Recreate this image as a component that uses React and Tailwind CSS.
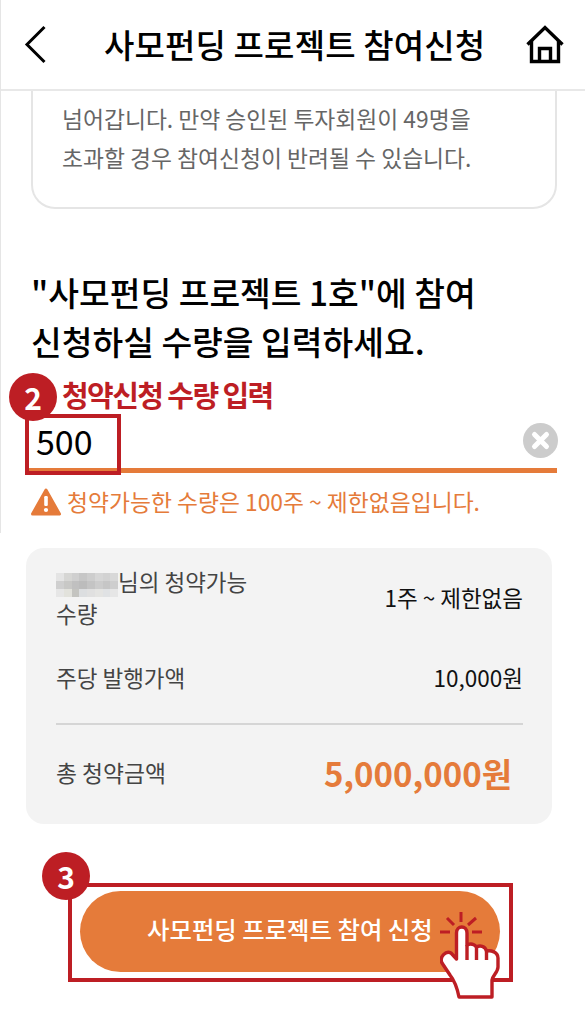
const FONT = "font-['Noto_Sans_CJK_KR','Noto_Sans',sans-serif]";

// 이름 모자이크
const BLUR = [
  '#e4e4e4', '#d6d6d4', '#cfcfcf', '#c6c6c6', '#cdcdcd', '#d6d6d6', '#d2d2d2', '#d8d8d8',
  '#cfcfcf', '#c8c8c6', '#c0c0c0', '#bcbcbc', '#c4c4c4', '#cccccc', '#c6c6c6', '#cecece',
  '#e6e6e6', '#e2e2dc', '#c4c4c0', '#dcdee0', '#e0e0e0', '#e4e4e2', '#e0e2e4', '#e6e6e6',
];

const BackIcon = () => (
  <svg width="24" height="40" viewBox="0 0 24 40" fill="none" stroke="#000" strokeWidth="3">
    <path d="M20.5 2 L3 19.5 L20.5 37" />
  </svg>
);

const HomeIcon = () => (
  <svg width="38" height="39" viewBox="0 0 38 39" fill="none" stroke="#000" strokeWidth="3.4">
    <path d="M1.5 19.5 L19 2.5 L36.5 19.5" />
    <path d="M5.5 15.5 V36.5 H32.5 V15.5" />
    <path d="M13.5 36.5 V23.5 H24.5 V36.5" />
  </svg>
);

const WarnIcon = () => (
  <svg width="30" height="28" viewBox="0 0 30 28">
    <path d="M15 2 L28.5 26 H1.5 Z" fill="#e57b3a" stroke="#e57b3a" strokeLinejoin="round" strokeWidth="3" />
    <rect x="13.2" y="8" width="3.6" height="10" rx="1.2" fill="#fff" />
    <circle cx="15" cy="22" r="2.1" fill="#fff" />
  </svg>
);

const ClearIcon = () => (
  <svg width="35" height="35" viewBox="0 0 35 35">
    <circle cx="17.5" cy="17.5" r="17.5" fill="#cccccc" />
    <path d="M11.5 11.5 L23.5 23.5 M23.5 11.5 L11.5 23.5" stroke="#fff" strokeWidth="5" strokeLinecap="round" />
  </svg>
);

const HandIcon = () => (
  <svg width="60" height="87" viewBox="0 0 60 87" fill="none" className="block">
    <path d="M0 20 H10 M7 6 L14 13 M21 0 V10 M36 6 L28 13 M32 20 H42" stroke="#bd1e24" strokeWidth="3" />
    <path
      d="M16.5 47 V21 C16.5 13 27 13 27 21 V33 C31 31 34 32 36.5 35 C40 33 45 34 46.5 39 C51 38 58 40 58 46 V55 C58 60 53 63 52 68 V85 H19 C17 75 14 68 10 63 L2 51 C-1 45 6 38 11 41 Z"
      fill="#fff"
      stroke="#bd1e24"
      strokeWidth="3.4"
      strokeLinejoin="round"
    />
    <path d="M27 33 V48 M36.5 35 V48 M46.5 39 V48" stroke="#bd1e24" strokeWidth="3.4" />
  </svg>
);

const Badge = ({ n, className }) => (
  <span className={`absolute flex h-12 w-12 items-center justify-center rounded-full bg-[#bd1e24] text-[30px] font-bold leading-none text-white ${className}`}>
    {n}
  </span>
);

const SummaryRow = ({ label, value }) => (
  <div className="flex items-center justify-between text-[22.5px] leading-[32px]">
    <div className="w-[200px] text-[#444]">{label}</div>
    <div className="text-[#111]">{value}</div>
  </div>
);

export default function App() {
  return (
    <div className={`${FONT} h-[1021px] w-[585px] overflow-hidden bg-white`}>
      <div className="h-[533px] border-l-[1px] border-[#e5e5e5]">
        <header className="flex h-[91px] items-center border-b-2 border-[#e8e8e8] pl-[23px] pr-[21px]">
          <BackIcon />
          <h1 className="ml-[56px] text-[33px] font-medium leading-none tracking-[0.15px] text-black">사모펀딩 프로젝트 참여신청</h1>
          <div className="ml-auto">
            <HomeIcon />
          </div>
        </header>

        <div className="ml-[30px] mr-[28px] h-[118px] rounded-b-[24px] border-2 border-t-0 border-[#e5e5e5] pl-[29px] pt-[9px] text-[22.8px] leading-[38.5px] text-[#666]">
          <p>넘어갑니다. 만약 승인된 투자회원이 49명을</p>
          <p>초과할 경우 참여신청이 반려될 수 있습니다.</p>
        </div>

        <h2 className="ml-[30px] mt-[58px] text-[33.4px] font-medium leading-[49px] text-black">
          "사모펀딩 프로젝트 1호"에 참여
          <br />
          신청하실 수량을 입력하세요.
        </h2>

        <div className="relative ml-[27px] mr-[28px] mt-[10px]">
          <div className="pl-[34px] text-[29px] font-bold leading-[38px] tracking-[-1.6px] text-[#bd1e24]">청약신청 수량 입력</div>
          <div className="flex h-[60px] items-center justify-between border-b-[5px] border-[#e57b3a] pl-[8px]">
            <span className="text-[34px] leading-none text-black">500</span>
            <span className="translate-x-px">
              <ClearIcon />
            </span>
          </div>
          {/* 강조 박스 */}
          <div className="absolute -left-[3px] top-[39px] h-[61px] w-[96px] border-[4px] border-[#bd1e24]" />
          <Badge n="2" className="-left-[19px] -top-[2px]" />
          <div className="mt-[13px] flex items-center gap-[6px] pl-[3px] text-[22.8px] leading-[32px] text-[#e57b3a]">
            <WarnIcon />
            <span>청약가능한 수량은 100주 ~ 제한없음입니다.</span>
          </div>
        </div>
      </div>

      <section className="ml-[26px] mt-[15px] h-[276px] w-[526px] rounded-[18px] bg-[#f3f3f3] pl-[30px] pr-[29px] pt-[17px]">
        <SummaryRow
          label={
            <>
              <span className="inline-grid h-[24px] w-[62px] grid-cols-8 grid-rows-3 align-middle">
                {BLUR.map((c, i) => (
                  <span key={i} style={{ backgroundColor: c }} />
                ))}
              </span>
              님의 청약가능 수량
            </>
          }
          value="1주 ~ 제한없음"
        />
        <div className="mt-[32px]">
          <SummaryRow label="주당 발행가액" value="10,000원" />
        </div>
        <div className="mt-[30px] border-t-2 border-[#d5d5d5]" />
        <div className="mt-[20px] flex items-center justify-between pr-[11px]">
          <span className="text-[22.8px] text-[#444]">총 청약금액</span>
          <span className="text-[33px] font-bold leading-[56px] text-[#e57b3a]">5,000,000원</span>
        </div>
      </section>

      <div className="relative ml-[68px] mt-[59px] h-[99px] w-[445px] border-[4px] border-[#bd1e24] p-[4px] pl-[8px] pr-[8px]">
        <Badge n="3" className="-left-[30px] -top-[35px]" />
        <button className="flex h-[81px] w-[420px] items-center rounded-full bg-[#e57b3a] pb-[4px] pl-[67px] text-[24.4px] font-medium text-white">
          사모펀딩 프로젝트 참여 신청
        </button>
        <span className="absolute left-[368px] top-[25px]">
          <HandIcon />
        </span>
      </div>
    </div>
  );
}
